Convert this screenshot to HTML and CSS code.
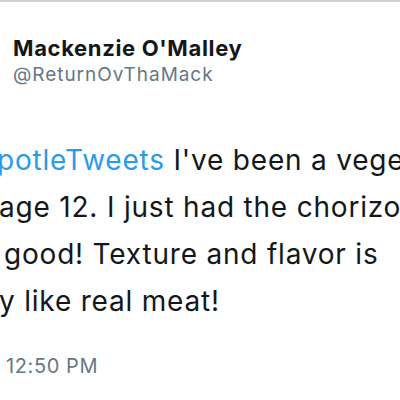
FILE: index.html
```html
<!DOCTYPE html>
<html>
<head>
<meta charset="utf-8">
<link rel="stylesheet" href="styles.css">
</head>
<body>
<div class="page">
  <div class="header">
    <div class="name">Mackenzie O'Malley</div>
    <div class="handle">@ReturnOvThaMack</div>
  </div>
  <div class="tweet">
    <div class="line l1"><span class="mention">potleTweets</span> I've been a vegetarian</div>
    <div class="line l2">age 12. I just had the chorizo</div>
    <div class="line l3">good! Texture and flavor is</div>
    <div class="line l4">y like real meat!</div>
  </div>
  <div class="time">12:50 PM</div>
</div>
</body>
</html>
```
FILE: styles.css
```css
html, body {
  margin: 0;
  padding: 0;
  background: #ffffff;
}
.page {
  width: 400px;
  height: 400px;
  overflow: hidden;
  border-top: 2px solid #cdd1d6;
  box-sizing: border-box;
  font-family: Inter, "Liberation Sans", sans-serif;
}
.header {
  padding: 33px 0 0 13px;
}
.name {
  font-size: 22px;
  font-weight: 700;
  letter-spacing: 0.65px;
  line-height: 27px;
  color: #14171a;
}
.handle {
  font-size: 19px;
  letter-spacing: 0.95px;
  line-height: 24px;
  margin-top: 1px;
  color: #657786;
}
.tweet {
  margin-top: 50px;
  font-size: 28px;
  font-weight: 400;
  letter-spacing: 0.8px;
  line-height: 47px;
  color: #14171a;
}
.line {
  white-space: nowrap;
}
.mention {
  color: #2a9bea;
}
.l1 { margin-left: -3px; }
.l2 { margin-left: -1px; }
.l3 { margin-left: 4px; }
.l4 { margin-left: -1px; }
.time {
  margin-top: 29px;
  padding-left: 6px;
  font-size: 20px;
  letter-spacing: 0.6px;
  line-height: 24px;
  color: #657786;
}
```
